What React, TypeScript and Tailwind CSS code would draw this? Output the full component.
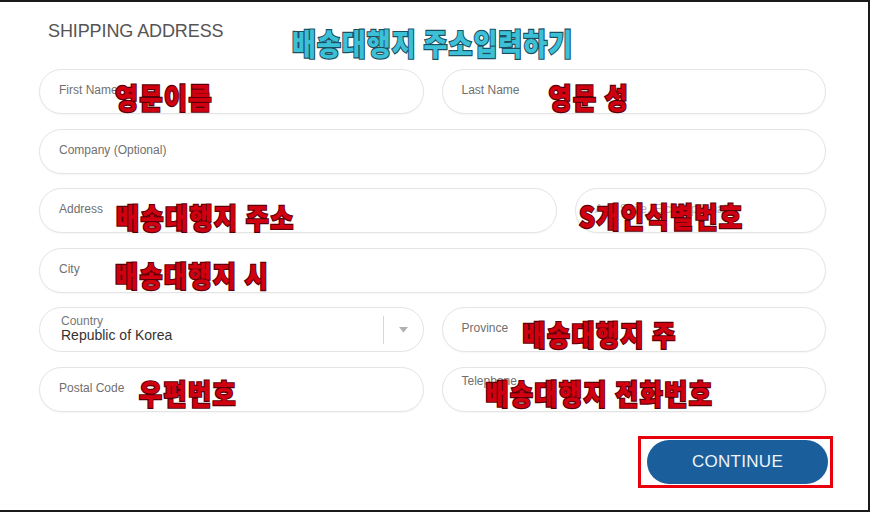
type Note = { text: string; left: number; top: number };

const noteStyle =
  "absolute whitespace-nowrap leading-none text-[25px] font-black tracking-[1.5px] text-[#d10010] [font-family:'Noto_Sans_CJK_KR',sans-serif] [-webkit-text-stroke:2px_#5a0008] [paint-order:stroke_fill] scale-y-115 origin-top-left pointer-events-none";

const Field = ({
  label,
  note,
  className = "",
  labelClass = "",
}: {
  label: string;
  note?: Note;
  className?: string;
  labelClass?: string;
}) => {
  return (
    <div
      className={`relative h-[45px] rounded-full border border-[#e4e4e4] bg-white shadow-[0_1px_2px_rgba(0,0,0,0.04)] flex items-center pl-[19px] ${className}`}
    >
      <span className={`text-[12px] text-[#707070] -mt-[3px] ${labelClass}`}>{label}</span>
      {note && (
        <span className={noteStyle} style={{ left: note.left, top: note.top }}>
          {note.text}
        </span>
      )}
    </div>
  );
};

const CountrySelect = () => {
  return (
    <div className="relative h-[45px] rounded-full border border-[#e4e4e4] bg-white flex items-center pl-[21px]">
      <div className="flex-1 flex flex-col leading-none -mt-[2px]">
        <span className="text-[12px] text-[#777]">Country</span>
        <span className="text-[14px] text-[#333] mt-[1px]">Republic of Korea</span>
      </div>
      <div className="w-px h-[28px] bg-[#d6d6d6]" />
      <div className="w-[39px] flex justify-center">
        <svg width="9" height="6" viewBox="0 0 9 6">
          <path d="M0 0h9L4.5 5.5z" fill="#b0b0b0" />
        </svg>
      </div>
    </div>
  );
};

export default function App() {
  return (
    <div className="w-[870px] h-[512px] bg-white border-t-2 border-r-2 border-b-2 border-[#1a1a1a] [font-family:'Liberation_Sans',Arial,sans-serif] overflow-hidden">
      <div className="relative pl-[48px] pt-[20px] h-[67px]">
        <h2 className="text-[18px] text-[#555] leading-none tracking-[-0.1px]">SHIPPING ADDRESS</h2>
        <span className="absolute left-[292px] top-[25px] whitespace-nowrap leading-none text-[26px] font-black tracking-[1px] text-[#3cc0d6] [font-family:'Noto_Sans_CJK_KR',sans-serif] [-webkit-text-stroke:2px_#1d4f63] [paint-order:stroke_fill] scale-y-115 origin-top-left">
          배송대행지 주소입력하기
        </span>
      </div>

      <div className="pl-[39px] pr-[42px] flex flex-col gap-y-[14.5px]">
        <div className="grid grid-cols-2 gap-x-[18px]">
          <Field label="First Name" note={{ text: "영문이름", left: 75, top: 13 }} />
          <Field label="Last Name" note={{ text: "영문 성", left: 106, top: 13 }} />
        </div>
        <Field label="Company (Optional)" />
        <div className="flex gap-x-[18px]">
          <Field
            className="flex-1"
            label="Address"
            note={{ text: "배송대행지 주소", left: 76, top: 14 }}
          />
          <Field
            className="w-[251px]"
            label="Apt, Suite, Etc. (Optional)"
            labelClass="text-[#b5b5b5]"
            note={{ text: "S개인식별번호", left: 3, top: 13 }}
          />
        </div>
        <Field label="City" note={{ text: "배송대행지 시", left: 75, top: 12 }} />
        <div className="grid grid-cols-2 gap-x-[18px]">
          <CountrySelect />
          <Field label="Province" note={{ text: "배송대행지 주", left: 80, top: 12 }} />
        </div>
        <div className="grid grid-cols-2 gap-x-[18px]">
          <Field label="Postal Code" note={{ text: "우편번호", left: 99, top: 11 }} />
          <Field
            label="Telephone"
            labelClass="-mt-[17px]"
            note={{ text: "배송대행지 전화번호", left: 43, top: 11 }}
          />
        </div>
      </div>

      <div className="flex justify-end pr-[35px] mt-[24px]">
        <div className="border-[3px] border-[#e8000d] pl-[6px] pr-[2px] py-[1px]">
          <button className="w-[181px] h-[44px] rounded-full bg-[#1b5e9c] text-[#eef4fa] text-[17px] tracking-[0.3px]">
            CONTINUE
          </button>
        </div>
      </div>
    </div>
  );
}
